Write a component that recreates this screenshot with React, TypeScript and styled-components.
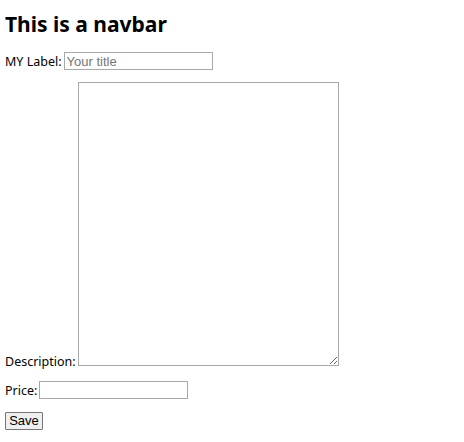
import React from "react";
import styled, { createGlobalStyle } from "styled-components";

const Global = createGlobalStyle`
  body {
    margin: 5px;
    font-family: "Noto Sans", "Noto Sans CJK SC", sans-serif;
    font-size: 12.5px;
    color: #000;
    background: #fff;
  }
`;

const Title = styled.h1`
  font-size: 21px;
  font-weight: 700;
  margin: 0 0 13px 0;
  padding-top: 4px;
  line-height: 30px;
`;

const Form = styled.form`
  display: block;
`;

const Row = styled.div<{ $gap: number }>`
  display: block;
  line-height: 16px;
  margin-bottom: ${(p) => p.$gap}px;
`;

const Label = styled.label`
  margin-right: 2px;
`;

const TextInput = styled.input`
  box-sizing: border-box;
  width: 149px;
  height: 18px;
  border: 1px solid #a9a9a9;
  padding: 0 2px;
  margin: 0;
  font-family: "Liberation Sans", Arial, sans-serif;
  font-size: 13px;
  vertical-align: baseline;
  &::placeholder {
    color: #757575;
  }
`;

const TextArea = styled.textarea`
  box-sizing: border-box;
  width: 261px;
  height: 284px;
  border: 1px solid #a9a9a9;
  margin: 0;
  padding: 2px;
  vertical-align: baseline;
`;

const Button = styled.button`
  display: block;
  box-sizing: border-box;
  width: 38px;
  height: 18px;
  padding: 0;
  font-family: "Liberation Sans", Arial, sans-serif;
  font-size: 13px;
  line-height: 14px;
  background: #efefef;
  border: 1px solid #767676;
  border-radius: 1px;
`;

export default function App() {
  return (
    <>
      <Global />
      <Title>This is a navbar</Title>
      <Form onSubmit={(e) => e.preventDefault()}>
        <Row $gap={12}>
          <Label htmlFor="title">MY Label:</Label>
          <TextInput id="title" placeholder="Your title" />
        </Row>
        <Row $gap={11}>
          <Label htmlFor="desc">Description:</Label>
          <TextArea id="desc" />
        </Row>
        <Row $gap={13}>
          <Label htmlFor="price">Price:</Label>
          <TextInput id="price" />
        </Row>
        <Button type="submit">Save</Button>
      </Form>
    </>
  );
}
